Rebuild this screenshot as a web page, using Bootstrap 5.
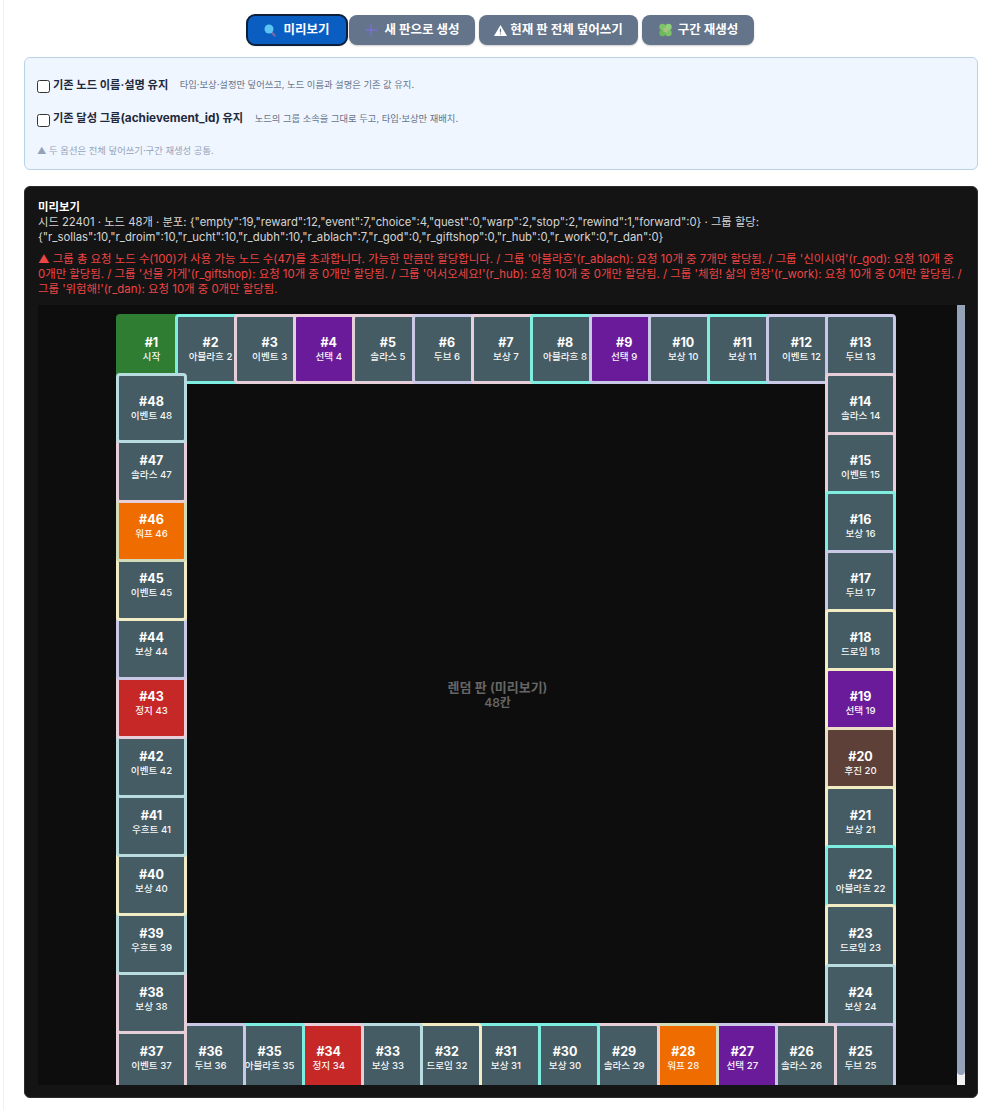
<!DOCTYPE html>
<html lang="ko"><head><meta charset="utf-8">
<link href="https://cdn.jsdelivr.net/npm/bootstrap@5.3.0/dist/css/bootstrap.min.css" rel="stylesheet">
<style>
html,body{height:1110px;overflow:hidden}
body{background:#fff;font-family:Inter,"Noto Sans CJK KR",sans-serif;color:#1e293b}
.pagewrap{margin-left:3px;border-left:1px solid #eef0f3;padding:15px 12px 0 20px;height:1110px}
.btn-bar{padding-left:223px;height:30px}
.act-btn{height:30px;font-size:12.5px;font-weight:700;color:#fff;background:#64748b;border:0;border-radius:8px;padding:0;white-space:nowrap;display:inline-flex;align-items:center;justify-content:center;gap:8px;box-shadow:0 1px 2px rgba(0,0,0,.2);flex:none;margin-right:4px}
.act-btn.on{background:#0a5ec2;outline:2px solid #0b1f3a;outline-offset:-1px;width:100px;margin-right:2px;gap:7px}
.b2{width:126px}.b3{width:159px;gap:3px}.b4{width:112px;gap:5px}
.opt-box{height:113px;background:#f0f6ff;border:1px solid #b9d3e6;border-radius:6px;padding:0 12px;margin-top:12px}
.opt-row{height:34px;font-size:11.25px}
.opt-row:first-child{margin-top:10px}
.opt-row input{width:13px;height:13px;margin:2px 3px 0 0;appearance:none;background:#fff;border:1px solid #333;border-radius:2.5px;flex:none}
.opt-row b{font-weight:700;color:#1e293b}
.opt-row b i{font-style:normal;font-size:11.75px}
.opt-row span{font-size:9.3px;color:#64748b;margin-left:11.5px}
.opt-note{font-size:9.35px;line-height:15px;color:#94a3b8;margin-top:7px}
.dark-panel{margin-top:16px;background:#141414;border:1px solid #2b2b2b;border-radius:6px;height:912px;padding:13px 13px 0;color:#d4d4d4;font-size:11.3px;line-height:15px}
.dark-panel h6{font-size:11.4px;line-height:15px;font-weight:700;color:#fff;margin:0}
.warn-line{color:#ef4444;margin-top:7px;height:45px;font-size:11.4px}
.board-view{position:relative;height:780px;width:927px;background:#0d0d0d;overflow:hidden;margin-top:8px}
.board-canvas{position:relative;width:780px;height:780px;margin:8.5px 0 0 78px}
.tile{position:absolute;width:70.9px;height:70.9px;border:3px solid #e6cfd8;border-radius:4px;background:#465c64;color:#fff;display:flex;flex-direction:column;align-items:center;justify-content:center;text-align:center;white-space:nowrap;box-sizing:border-box}
.tile b{font-size:12.5px;line-height:15px;font-weight:700}
.tile i{font-style:normal;font-size:9.6px;line-height:13px;font-weight:500;opacity:.95}
.center-txt{position:absolute;inset:0 8px 0 0;display:flex;flex-direction:column;align-items:center;justify-content:center;color:#666;font-weight:600;font-size:13px;line-height:15px}
.center-txt small{font-size:12px}
.fake-scroll{position:absolute;right:0;top:0;bottom:0;width:8px;background:#f1f1f1}
.fake-scroll div{height:770px;background:#94a3b8;border-radius:0 0 4px 4px}
.t-t{border-color:#7eeee0}.t-p{border-color:#e6cfd8}.t-l{border-color:#c9c8e6}.t-y{border-color:#f1ecc4}.t-c{border-color:#b9dce0}.t-g{background:#2e7d32;border-color:#2e7d32}.t-v{background:#6a1b9a}.t-o{background:#ef6c00;border-color:#d3dcb8}.t-r{background:#c62828}.t-b{background:#5d4037;border-color:#ece0c4}.t-w{background:#6a1b9a;border-color:#f1ecc4}
</style></head><body>
<div class="pagewrap">
<div class="d-flex btn-bar">
<button class="act-btn on"><svg width="12" height="13" viewBox="0 0 12 13"><path d="M7 7.500l3.600 4" stroke="#7a6aa8" stroke-width="2.200" stroke-linecap="round"/><circle cx="5" cy="5" r="4.500" fill="#5cc4f0"/></svg>미리보기</button>
<button class="act-btn b2"><svg width="12" height="12" viewBox="0 0 12 12"><path d="M6 0v12M0 6h12" stroke="#7a6fd0" stroke-width="1.400"/></svg>새 판으로 생성</button>
<button class="act-btn b3"><svg width="13" height="11" viewBox="0 0 13 11"><path d="M6.500 0L13 11H0z" fill="#fff"/><path d="M6.500 3.800v3.700M6.500 8.400v1.100" stroke="#64748b" stroke-width="1.200"/></svg>현재 판 전체 덮어쓰기</button>
<button class="act-btn b4"><svg width="15" height="14" viewBox="0 0 15 14"><circle cx="4.500" cy="4" r="3.200" fill="#7cc36a"/><circle cx="10.500" cy="4" r="3.200" fill="#8fd07a"/><circle cx="4.500" cy="10" r="3.200" fill="#6db85e"/><circle cx="10.500" cy="10" r="3.200" fill="#7cc36a"/><circle cx="7.500" cy="7" r="2.500" fill="#a9c27a"/></svg>구간 재생성</button>
</div>
<div class="opt-box">
<div class="d-flex align-items-center opt-row"><input type="checkbox"><b>기존 노드 이름·설명 유지</b><span>타입·보상·설정만 덮어쓰고, 노드 이름과 설명은 기존 값 유지.</span></div>
<div class="d-flex align-items-center opt-row"><input type="checkbox"><b>기존 달성 그룹<i>(achievement_id)</i> 유지</b><span>노드의 그룹 소속을 그대로 두고, 타입·보상만 재배치.</span></div>
<div class="opt-note">▲ 두 옵션은 전체 덮어쓰기·구간 재생성 공통.</div>
</div>
<div class="dark-panel">
<h6>미리보기</h6>
<div>시드 22401 · 노드 48개 · 분포: {"empty":19,"reward":12,"event":7,"choice":4,"quest":0,"warp":2,"stop":2,"rewind":1,"forward":0} · 그룹 할당: {"r_sollas":10,"r_droim":10,"r_ucht":10,"r_dubh":10,"r_ablach":7,"r_god":0,"r_giftshop":0,"r_hub":0,"r_work":0,"r_dan":0}</div>
<div class="warn-line">▲ 그룹 총 요청 노드 수(100)가 사용 가능 노드 수(47)를 초과합니다. 가능한 만큼만 할당합니다. / 그룹 '아블라흐'(r_ablach): 요청 10개 중 7개만 할당됨. / 그룹 '신이시여'(r_god): 요청 10개 중 0개만 할당됨. / 그룹 '선물 가게'(r_giftshop): 요청 10개 중 0개만 할당됨. / 그룹 '어서오세요!'(r_hub): 요청 10개 중 0개만 할당됨. / 그룹 '체험! 삶의 현장'(r_work): 요청 10개 중 0개만 할당됨. / 그룹 '위험해!'(r_dan): 요청 10개 중 0개만 할당됨.</div>
<div class="board-view">
<div class="board-canvas" id="cv"></div>
<div class="center-txt">렌덤 판 (미리보기)<small>48칸</small></div>
<div class="fake-scroll"><div></div></div>
</div>
</div>
</div>
<script>
var d=[["시작","g"],["아블라흐 2","t"],["이벤트 3","p"],["선택 4","v"],["솔라스 5","p"],["두브 6","l"],["보상 7","p"],["아블라흐 8","t"],["선택 9","v t-l"],["보상 10","l"],["보상 11","t"],["이벤트 12","l"],["두브 13","l"],["솔라스 14","p"],["이벤트 15","p"],["보상 16","t"],["두브 17","l"],["드로임 18","y"],["선택 19","w"],["후진 20","b"],["보상 21","y"],["아블라흐 22","t"],["드로임 23","y"],["보상 24","c"],["두브 25","l"],["솔라스 26","p"],["선택 27","v t-l"],["워프 28","o"],["솔라스 29","p"],["보상 30","t"],["보상 31","t"],["드로임 32","y"],["보상 33","c"],["정지 34","r"],["아블라흐 35","t"],["두브 36","l"],["이벤트 37","p"],["보상 38","p"],["우흐트 39","c"],["보상 40","y"],["우흐트 41","c"],["이벤트 42","c"],["정지 43","r"],["보상 44","l"],["이벤트 45","y"],["워프 46","o"],["솔라스 47","p"],["이벤트 48","c"]];
var s=59.09,h='';
d.forEach(function(n,i){var x,y;
if(i<=12){x=i;y=0}else if(i<=24){x=12;y=i-12}else if(i<=36){x=36-i;y=12}else{x=0;y=48-i}
h+='<div class="tile t-'+n[1]+'" style="left:'+(x*s).toFixed(1)+'px;top:'+(y*s).toFixed(1)+'px"><b>#'+(i+1)+'</b><i>'+n[0]+'</i></div>';});
document.getElementById('cv').innerHTML=h;
</script>
<script src="https://cdn.jsdelivr.net/npm/bootstrap@5.3.0/dist/js/bootstrap.bundle.min.js"></script>
</body></html>
